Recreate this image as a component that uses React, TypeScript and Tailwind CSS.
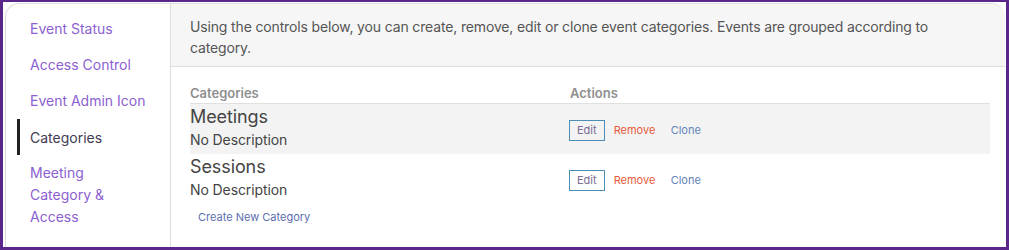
import React from "react";

const font = { fontFamily: "Inter, 'Noto Sans', sans-serif" };

function Row({ name, shaded }: { name: string; shaded?: boolean }) {
  return (
    <div className={`flex h-[50px] ${shaded ? "bg-[#f3f3f3]" : "bg-white"}`}>
      <div className="w-[378px]">
        <div className="text-[18px] leading-[22px] text-[#444] pt-[2px] tracking-[-0.1px]">{name}</div>
        <div className="text-[14px] leading-[24px] text-[#444] tracking-[-0.1px]">No Description</div>
      </div>
      <div className="flex items-center gap-[9px] text-[11px] pl-[1px] pt-[2px]">
        <span className="border border-[#4b8fb6] px-[7px] h-[21px] leading-[19px] text-[#7a6c95]">Edit</span>
        <span className="text-[#e85a3c] w-[48px]">Remove</span>
        <span className="text-[#6384b8]">Clone</span>
      </div>
    </div>
  );
}

export default function App() {
  const items = ["Event Status", "Access Control", "Event Admin Icon"];
  return (
    <div style={font} className="w-[1009px] h-[250px] bg-[#5b2689] pl-[3px] pt-[2px] pr-[3px] pb-[3px]">
      <div className="h-full bg-white flex overflow-hidden">
        <div className="h-full w-full flex bg-white border-l border-t border-[#dcdcdc] rounded-tl-[14px] rounded-tr-[14px] ml-[2px] mt-[1px] mr-[1px] overflow-hidden">
          <div className="w-[165px] shrink-0 border-r border-[#dddddd] pt-[14px] overflow-hidden">
            {items.map((t) => (
              <div key={t} className="pl-[24px] h-[36px] text-[14px] leading-[22px] text-[#8c5fd2]">
                {t}
              </div>
            ))}
            <div className="border-l-[3px] border-[#222] ml-[11px] pl-[10px] h-[36px] flex items-center text-[14px] text-[#3f3a52] -mt-[7px] mb-[7px]">
              Categories
            </div>
            <div className="pl-[24px] text-[14px] leading-[22px] text-[#8c5fd2]">
              Meeting
              <br />
              Category &amp;
              <br />
              Access
            </div>
            <div className="pl-[24px] mt-[14px] text-[14px] leading-[22px] text-[#8c5fd2]">Live Event</div>
          </div>
          <div className="flex-1 flex flex-col">
            <div className="bg-[#f6f6f6] border-b border-[#dddddd] h-[63px] pl-[19px] pr-[40px] pt-[12px] text-[14px] leading-[21px] tracking-[-0.15px] text-[#555]">
              Using the controls below, you can create, remove, edit or clone event categories. Events are grouped according to category.
            </div>
            <div className="pl-[19px] pr-[15px] pt-[17px]">
              <div className="flex h-[20px] border-b border-[#e0e0e0] text-[13px] font-semibold text-[#8f8f8f]">
                <div className="w-[380px]">Categories</div>
                <div>Actions</div>
              </div>
              <Row name="Meetings" shaded />
              <Row name="Sessions" />
              <div className="pl-[8px] pt-[5px] text-[11px] text-[#5b6eb0]">Create New Category</div>
            </div>
          </div>
        </div>
      </div>
    </div>
  );
}
